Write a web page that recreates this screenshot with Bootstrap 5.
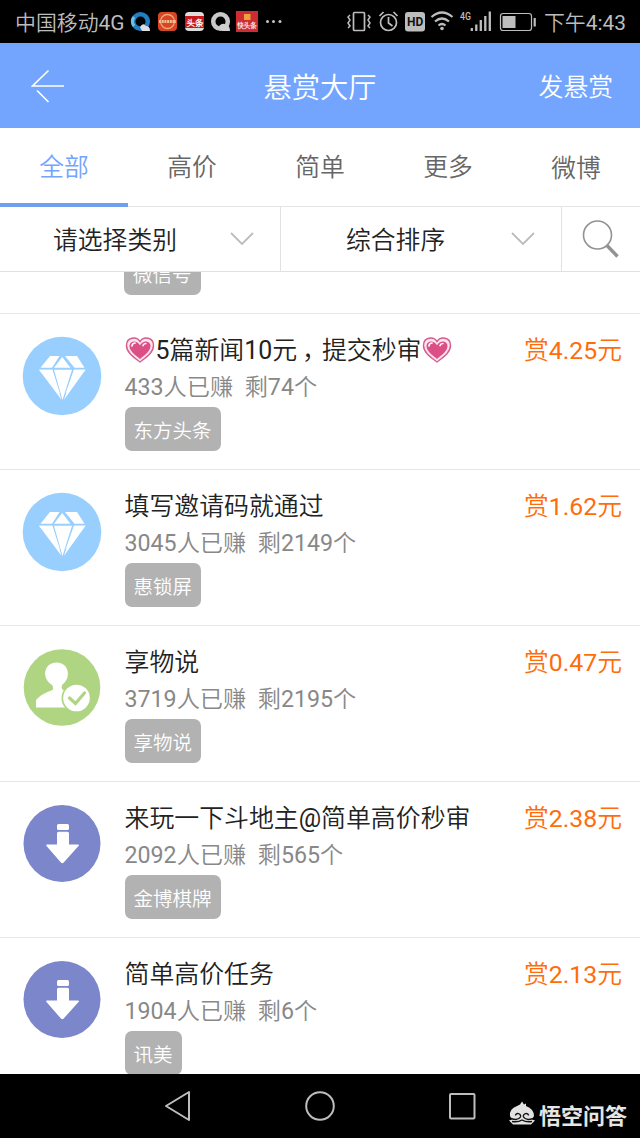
<!DOCTYPE html>
<html lang="zh-CN">
<head>
<meta charset="utf-8">
<meta name="viewport" content="width=device-width, initial-scale=1">
<title>悬赏大厅</title>
<link href="https://cdn.jsdelivr.net/npm/bootstrap@5.3.0/dist/css/bootstrap.min.css" rel="stylesheet">
<style>
body{font-family:Roboto,"Noto Sans CJK SC DemiLight","Noto Sans CJK SC",sans-serif;font-weight:400;background:#fff;color:#333;width:640px;height:1138px;overflow:hidden;font-size:24.8px;line-height:37px}
svg{display:block;flex:none}
.status{height:43px;background:#000;color:#bdbdbd;font-size:20.9px;padding:2px 14px 0 15px}
.status span{padding-top:1px;white-space:nowrap}
.topbar{height:85px;background:#73a5ff;color:#fff;display:grid;grid-template-columns:1fr auto 1fr}
.topbar h1{font-size:28.3px;font-weight:400;padding-top:6px}
.tabs{height:79px;border-bottom:1px solid #e4e4e4;color:#666}
.tabs a{color:inherit;text-decoration:none;border-bottom:4px solid transparent;margin-bottom:-1px;padding-top:3px}
.tabs a.active{color:#73a5ff;border-color:#6f9fee}
.filters{height:65px;border-bottom:1px solid #e1e1e1;color:#222}
.filters>div+div{border-left:1px solid #e1e1e1}
.filters span{padding-top:3px}
.task{height:156px;border-bottom:1px solid #e6e6e6;padding:18px 18px 0 22px}
.task-cut{height:42px;padding-bottom:18px;padding-left:124px}
.pic{width:80px;height:80px;margin-top:3.5px;margin-right:22.5px}
.title{color:#222;height:36px;font-size:24.9px}
.sub{color:#888;font-size:23.2px;height:39px;white-space:pre;line-height:39px}
.chip{background:#b2b2b2;color:#fff;font-size:19.5px;border-radius:7px;height:44px;line-height:49px;padding:0 9px;width:max-content;flex:none}
.price{color:#ff6c0a}
.heart{display:inline-block;vertical-align:-4px;margin:0 1px 0 0}
.comma{position:relative;left:5px}
.navkeys{height:64px;background:#000}
.mark-text{font-family:"Noto Sans CJK SC",sans-serif;color:#e5e5e5;font-size:22px;font-weight:700;line-height:30px}
</style>
</head>
<body class="d-flex flex-column">
<svg width="0" height="0" class="position-absolute">
<defs>
<symbol id="diamond" viewBox="0 0 80 80"><circle cx="40" cy="40" r="39.3" fill="#99cfff"/><g fill="#fff"><path d="M28 20h9.500L30 31.700H18.500zM43 20h12L62.500 31.700H52.500zM40.200 21L48.500 31.700H32zM17 33.700h13.500l7.500 24zM32 33.700h18L40.500 64zM52 33.700h11.500L43.500 57.500z"/><path d="M17 33.700h13l9.500 30zM52 33.700h11.500L42 63.700z"/></g></symbol>
<symbol id="person" viewBox="0 0 80 80"><circle cx="40" cy="39.500" r="38.3" fill="#afd583"/><path fill="#fff" d="M14 59.500V52q5-6 16.500-10 1.500-2-.5-5C19 30 22 14.500 34.500 14.500S50 30 40 37q-1 3 .5 4.500l9.500 4.500-4 13.500z"/><circle cx="54.500" cy="50" r="15" fill="#afd583"/><circle cx="54.500" cy="50" r="13.300" fill="#fff"/><path d="M47.500 50l6 5.500 9-10.500" fill="none" stroke="#afd583" stroke-width="3.200" stroke-linecap="round"/></symbol>
<symbol id="down" viewBox="0 0 80 80"><circle cx="40" cy="39.500" r="38.500" fill="#7b86cb"/><g fill="#fff" transform="translate(0 -1.500)"><rect x="35" y="21.500" width="12" height="6" rx="1.500"/><path d="M36.500 29.200h9q1.500 0 1.500 1.500V42h9q2 0 .5 1.500L41.700 60q-1.400 1.500-2.800 0L24.500 43.500Q23.500 42 25 42H35V30.700q0-1.500 1.500-1.500z"/></g></symbol>
<symbol id="heart" viewBox="0 0 29 26"><path d="M14.500 25C8 20 1 15.500 1 8.500 1 0 11-1 14.500 4.500 18-1 28 0 28 8.500c0 7-7 11.500-13.500 16.500z" fill="#fce4ef" stroke="#d45b8c" stroke-width="1.400"/><path d="M14.500 22C9 17.500 4 14 4 9c0-6 8-6 10.500-.8C17 3 25 3 25 9c0 5-5 8.500-10.500 13z" fill="#dc4f86"/><path d="M6.500 9c.2-2 1.500-3 3-3M17.500 8.500c.5-1.300 1.500-2 2.800-2" stroke="#fff" stroke-width="1.700" fill="none" stroke-linecap="round"/></symbol>
<symbol id="chev" viewBox="0 0 24 14"><path d="M1 1l11 11L23 1" fill="none" stroke="#bcbcbc" stroke-width="1.800"/></symbol>
</defs></svg>

<header class="status d-flex align-items-center justify-content-between">
<div class="d-flex align-items-center">
<span style="width:113px">中国移动4G</span>
<svg width="148" height="24" viewBox="127 11 148 24">
<circle cx="139.500" cy="21.500" r="7.300" fill="none" stroke="#227ec0" stroke-width="4.500"/><path d="M133 26a7.500 7.500 0 0 1 0-9" stroke="#70c1dc" stroke-width="3" fill="none"/><path d="M139 27q3-5 6-1 4 0 4 5h-8z" fill="#dedede"/>
<rect x="157" y="12" width="19" height="19" rx="4" fill="#d74524"/><circle cx="166.500" cy="21.500" r="7" fill="none" stroke="#eba878" stroke-width="1.300"/><path d="M158 21.500h17" stroke="#efbf94" stroke-width="3" stroke-dasharray="2 .7"/>
<rect x="184" y="12" width="19" height="19" rx="4" fill="#ddd"/><rect x="184" y="16" width="19" height="12" fill="#c6191c"/><text x="185.500" y="25.500" font-size="8.500" font-weight="700" fill="#fff">头条</text>
<circle cx="219.500" cy="21.500" r="7.300" fill="none" stroke="#c9c9c9" stroke-width="4.500"/><path d="M218 26q4-4 7-1 4 0 4 6h-8z" fill="#d0d0d0"/>
<rect x="235" y="11" width="22" height="21" fill="#ce2c32"/><rect x="243" y="14" width="6.500" height="6" fill="#e8a33d"/><text x="236.300" y="28" font-size="6.500" font-weight="700" fill="#eed">快头条</text>
<g fill="#c4c4c4"><circle cx="266.500" cy="21.500" r="1.500"/><circle cx="272.500" cy="21.500" r="1.500"/></g></svg>
<svg width="6" height="24"><circle cx="4" cy="10.500" r="1.500" fill="#c4c4c4"/></svg>
</div>
<div class="d-flex align-items-center">
<svg width="192" height="24" viewBox="346 11 192 24" fill="none" stroke="#bdbdbd" stroke-width="1.700" style="margin-right:5px">
<rect x="353.500" y="12.500" width="11" height="18" rx="1"/><path d="M350 15l-2 2 2 3-2 3 2 3-2 2M368 15l2 2-2 3 2 3-2 3 2 2" stroke-width="1.500"/>
<circle cx="388.500" cy="22.500" r="8"/><path d="M388.500 17v6l4 3M379.500 16l4-4M397.500 16l-4-4"/>
<rect x="405" y="12" width="20" height="19.500" rx="3" fill="#bdbdbd" stroke="none"/><text x="407" y="26.300" font-size="12" font-weight="700" fill="#111" stroke="none">HD</text>
<path d="M431.500 17q10.500-9 21 0M435 21.500q7-6 14 0M438.500 25.500q3.500-3 7 0" stroke-width="2.200"/><circle cx="442" cy="28.500" r="1.800" fill="#bdbdbd" stroke="none"/>
<text x="460" y="19.500" font-size="10.500" font-weight="500" textLength="11" lengthAdjust="spacingAndGlyphs" fill="#bdbdbd" stroke="none">4G</text>
<path d="M471.800 28v3M476.300 24.500v6.500M480.800 20v11M485.300 16v15M489.800 11.500V31" stroke-width="2.300"/>
<rect x="500.500" y="13.500" width="31" height="17" rx="2.500" stroke-width="1.200"/><path d="M502.500 16h13v12h-13z" fill="#bdbdbd" stroke="none"/><path d="M534.700 18v8.500" stroke-width="2.200"/></svg>
<span class="text-end" style="width:83px">下午4:43</span></div>
</header>

<nav class="topbar align-items-center">
<svg width="34" height="34" viewBox="0 0 34 34" style="margin-left:31px" fill="none" stroke="#fff" stroke-width="1.700"><path d="M17.500 1.500L1.500 17H33M6 21.500L17.500 33"/></svg>
<h1 class="m-0">悬赏大厅</h1>
<span class="text-end" style="padding:4px 27px 0 0">发悬赏</span>
</nav>

<nav class="tabs d-flex text-center">
<a class="active col d-flex align-items-center justify-content-center" href="#">全部</a>
<a class="col d-flex align-items-center justify-content-center" href="#">高价</a>
<a class="col d-flex align-items-center justify-content-center" href="#">简单</a>
<a class="col d-flex align-items-center justify-content-center" href="#">更多</a>
<a class="col d-flex align-items-center justify-content-center" href="#" style="padding-top:6px">微博</a>
</nav>

<section class="filters d-flex">
<div class="d-flex align-items-center justify-content-between" style="width:280px;padding:0 26px 0 53px"><span>请选择类别</span><svg width="24" height="14"><use href="#chev"/></svg></div>
<div class="d-flex align-items-center justify-content-between" style="width:281px;padding:0 26px 0 65px"><span>综合排序</span><svg width="24" height="14"><use href="#chev"/></svg></div>
<div class="d-flex align-items-center justify-content-center flex-fill"><svg width="38" height="40" viewBox="0 0 38 40" fill="none" stroke="#929292"><circle cx="15.500" cy="16" r="14" stroke-width="1.600"/><path d="M25 26.500L35.500 37.500" stroke-width="3.400"/></svg></div>
</section>

<main class="flex-fill overflow-hidden" style="height:802px;min-height:0">
<div class="task task-cut d-flex align-items-end overflow-hidden"><span class="chip">微信号</span></div>
<article class="task d-flex"><svg class="pic"><use href="#diamond"/></svg>
<div class="flex-fill"><div class="title"><svg class="heart" width="30" height="26"><use href="#heart"/></svg>5篇新闻10元<span class="comma">，</span>提交秒审<svg class="heart" width="30" height="26"><use href="#heart"/></svg></div><div class="sub">433人已赚  剩74个</div><div class="chip">东方头条</div></div><div class="price">赏4.25元</div></article>
<article class="task d-flex"><svg class="pic"><use href="#diamond"/></svg>
<div class="flex-fill"><div class="title">填写邀请码就通过</div><div class="sub">3045人已赚  剩2149个</div><div class="chip">惠锁屏</div></div><div class="price">赏1.62元</div></article>
<article class="task d-flex"><svg class="pic"><use href="#person"/></svg>
<div class="flex-fill"><div class="title">享物说</div><div class="sub">3719人已赚  剩2195个</div><div class="chip">享物说</div></div><div class="price">赏0.47元</div></article>
<article class="task d-flex"><svg class="pic"><use href="#down"/></svg>
<div class="flex-fill"><div class="title">来玩一下斗地主@简单高价秒审</div><div class="sub">2092人已赚  剩565个</div><div class="chip">金博棋牌</div></div><div class="price">赏2.38元</div></article>
<article class="task d-flex"><svg class="pic"><use href="#down"/></svg>
<div class="flex-fill"><div class="title">简单高价任务</div><div class="sub">1904人已赚  剩6个</div><div class="chip">讯美</div></div><div class="price">赏2.13元</div></article>
</main>

<footer class="navkeys d-flex align-items-center">
<svg width="330" height="40" viewBox="160 1086 330 40" style="margin-left:160px" fill="none" stroke="#bdbdbd" stroke-width="2" stroke-linejoin="round"><path d="M189 1092v28l-23-14z"/><circle cx="320" cy="1106" r="13.800"/><rect x="450" y="1094" width="24.500" height="24.500" rx="1"/></svg>
<div class="d-flex align-items-center" style="margin:15px 0 0 19px">
<svg width="26" height="26" viewBox="0 0 26 26"><path d="M1 15Q0 8 8 5l3-1.500L13 .5l2 3 2-1V5q8 3 8 10l-2 3.500 3 1-4 4H4l-4-4 3-1z" fill="#e2e2e2"/><path d="M2 17.500q7 2.500 9.500-1.500c1-4-5-4.500-5-1.500M24 17.500q-7 2.500-9.500-1.500c-1-4 5-4.500 5-1.500M3 20.500q6 1 10-1.500 4 2.500 10 1.500" fill="none" stroke="#111" stroke-width="1.400"/></svg>
<span class="mark-text" style="margin-left:4px">悟空问答</span></div>
</footer>
<script src="https://cdn.jsdelivr.net/npm/bootstrap@5.3.0/dist/js/bootstrap.bundle.min.js"></script>
</body>
</html>
